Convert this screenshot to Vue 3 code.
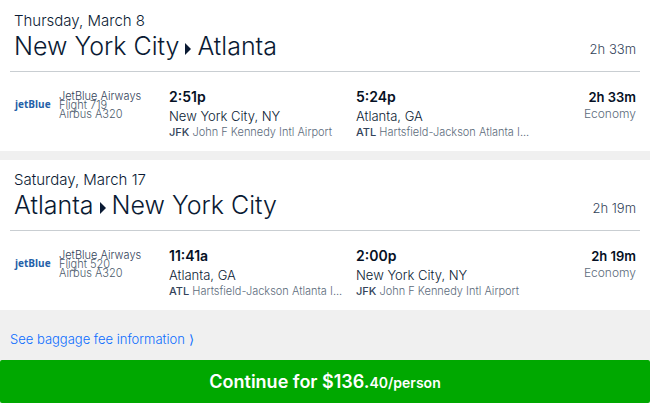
<script setup>
const flights = [
  {
    date: 'Thursday, March 8',
    from: 'New York City',
    to: 'Atlanta',
    duration: '2h 33m',
    airline: 'JetBlue Airways',
    number: 'Flight 719',
    plane: 'Airbus A320',
    stops: [
      { time: '2:51p', city: 'New York City, NY', code: 'JFK', airport: 'John F Kennedy Intl Airport' },
      { time: '5:24p', city: 'Atlanta, GA', code: 'ATL', airport: 'Hartsfield-Jackson Atlanta I...' },
    ],
    cabin: 'Economy',
  },
  {
    date: 'Saturday, March 17',
    from: 'Atlanta',
    to: 'New York City',
    duration: '2h 19m',
    airline: 'JetBlue Airways',
    number: 'Flight 520',
    plane: 'Airbus A320',
    stops: [
      { time: '11:41a', city: 'Atlanta, GA', code: 'ATL', airport: 'Hartsfield-Jackson Atlanta I...' },
      { time: '2:00p', city: 'New York City, NY', code: 'JFK', airport: 'John F Kennedy Intl Airport' },
    ],
    cabin: 'Economy',
  },
]
</script>

<template>
  <main class="itinerary">
    <section v-for="flight in flights" :key="flight.date" class="card">
      <header class="head">
        <div>
          <p class="date">{{ flight.date }}</p>
          <h2 class="route">
            <span>{{ flight.from }}</span>
            <svg class="arrow" viewBox="0 0 6 12" aria-hidden="true"><path d="M0 0 6 6 0 12z" /></svg>
            <span>{{ flight.to }}</span>
          </h2>
        </div>
        <span class="total">{{ flight.duration }}</span>
      </header>
      <div class="leg">
        <span class="logo">jetBlue</span>
        <div class="carrier">
          <p class="airline">{{ flight.airline }}</p>
          <p>{{ flight.number }}</p>
          <p>{{ flight.plane }}</p>
        </div>
        <div v-for="stop in flight.stops" :key="stop.code" class="stop">
          <p class="time">{{ stop.time }}</p>
          <p class="city">{{ stop.city }}</p>
          <p class="airport"><b>{{ stop.code }}</b> {{ stop.airport }}</p>
        </div>
        <div class="summary">
          <p class="time small">{{ flight.duration }}</p>
          <p class="cabin">{{ flight.cabin }}</p>
        </div>
      </div>
    </section>
    <div class="fees">
      <a href="#baggage">See baggage fee information ⟩</a>
    </div>
    <button class="continue" type="button">Continue for $136.<small>40/person</small></button>
  </main>
</template>

<style>
body {
  margin: 0;
  background: #f0f0f0;
}
</style>

<style scoped>
.itinerary {
  display: flex;
  flex-direction: column;
  font-family: Inter, "Liberation Sans", sans-serif;
  color: #0a1a33;
}
p,
h2 {
  margin: 0;
}
.card {
  background: #fff;
  padding: 0 14px 12px;
}
.card:first-child {
  padding-top: 1px;
  margin-bottom: 9px;
}
.head {
  display: flex;
  justify-content: space-between;
  align-items: flex-end;
  margin: 0 -4px;
  padding: 10px 4px 9px;
  border-bottom: 1px solid #c9ced2;
}
.date {
  font-size: 15px;
  font-weight: 300;
  line-height: 20px;
}
.route {
  display: flex;
  align-items: center;
  gap: 6px;
  font-size: 25px;
  font-weight: 300;
  line-height: 31px;
}
.arrow {
  width: 6px;
  height: 12px;
  margin-top: 4px;
  fill: #0a1a33;
}
.total {
  font-size: 13px;
  font-weight: 300;
  line-height: 26px;
  color: #33435a;
}
.leg {
  display: grid;
  grid-template-columns: 45px minmax(0, 110fr) minmax(0, 187fr) minmax(0, 187fr) minmax(0, 93fr);
  padding-top: 15px;
  white-space: nowrap;
}
.logo {
  padding: 9px 0 0 1px;
  font-family: "Open Sans", "Liberation Sans", sans-serif;
  font-size: 10px;
  font-weight: 700;
  line-height: 16px;
  color: #2460a8;
}
.carrier {
  padding-top: 5px;
  font-size: 11px;
  font-weight: 300;
  line-height: 9px;
  color: #4c5b6c;
}
.airline {
  color: #33435a;
}
.time {
  font-size: 14px;
  font-weight: 600;
  line-height: 20px;
  color: #051024;
}
.small {
  font-size: 13px;
}
.city {
  font-size: 13px;
  font-weight: 300;
  line-height: 18px;
}
.airport {
  font-size: 11px;
  font-weight: 300;
  line-height: 14px;
  color: #5c6b7b;
}
.airport b {
  font-weight: 500;
  color: #33435a;
}
.summary {
  text-align: right;
}
.cabin {
  font-size: 12px;
  font-weight: 300;
  line-height: 14px;
  color: #5c6b7b;
}
.fees {
  padding: 19px 10px 11px;
  font-size: 13px;
  line-height: 20px;
}
.fees a {
  font-weight: 300;
  color: #0a6cff;
  text-decoration: none;
}
.continue {
  height: 43px;
  border: 0;
  border-radius: 2px;
  background: #00a800;
  color: #fff;
  font-family: inherit;
  font-size: 18px;
  font-weight: 600;
}
.continue small {
  font-size: 14px;
}
</style>
